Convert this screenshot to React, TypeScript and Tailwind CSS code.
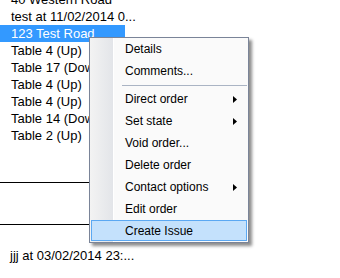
const listFont = { fontFamily: '"Liberation Sans Narrow", "Liberation Sans", Arial, sans-serif' };

const rows = [
  "40 Western Road",
  "test at 11/02/2014 0...",
  "123 Test Road",
  "Table 4 (Up)",
  "Table 17 (Down)",
  "Table 4 (Up)",
  "Table 4 (Up)",
  "Table 14 (Down)",
  "Table 2 (Up)",
];

type MenuItem = { label: string; sub?: boolean; hover?: boolean } | "sep";

const menu: MenuItem[] = [
  { label: "Details" },
  { label: "Comments..." },
  "sep",
  { label: "Direct order", sub: true },
  { label: "Set state", sub: true },
  { label: "Void order..." },
  { label: "Delete order" },
  { label: "Contact options", sub: true },
  { label: "Edit order" },
  { label: "Create Issue", hover: true },
];

function Arrow() {
  return (
    <svg width="4" height="7" viewBox="0 0 4 7" className="absolute right-[11px] top-[8px]">
      <path d="M0 0 L4 3.5 L0 7 Z" fill="#000" />
    </svg>
  );
}

function ContextMenu() {
  return (
    <div
      className="absolute left-[89px] top-[37px] w-[160px] h-[206px] border border-[#7a8498] bg-[#fafafa] shadow-[3px_3px_3px_rgba(0,0,0,0.45)] text-[12px] text-black"
      style={{ fontFamily: '"Liberation Sans", Arial, sans-serif' }}
    >
      <div className="absolute left-0 top-0 bottom-0 w-[24px] bg-gradient-to-r from-[#f3f3f3] to-[#e3e5e9] border-r border-white" />
      <div className="relative flex flex-col">
        {menu.map((item, i) =>
          item === "sep" ? (
            <div key={i} className="h-[6px] flex items-center pl-[32px] pr-[1px]">
              <div className="h-px w-full bg-[#aab4c4]" />
            </div>
          ) : item.hover ? (
            <div key={i} className="relative mx-[1px] h-[21px] mb-[1px] border border-[#5ba8f2] bg-[#c4e1fc] flex items-center pl-[33px]">
              {item.label}
            </div>
          ) : (
            <div key={i} className="relative h-[22px] flex items-center pl-[35px]">
              {item.label}
              {item.sub && <Arrow />}
            </div>
          )
        )}
      </div>
    </div>
  );
}

export default function App() {
  return (
    <div className="relative w-[340px] h-[278px] overflow-hidden bg-white">
      <div className="w-[125px] mt-[-9px] flex flex-col text-[13px] text-black" style={listFont}>
        {rows.map((r, i) => (
          <div
            key={i}
            className={`h-[17px] leading-[17px] pl-[11px] whitespace-nowrap ${i === 2 ? "bg-[#3399ff] text-white" : ""}`}
          >
            {r}
          </div>
        ))}
        <div className="mt-[38px] h-px bg-black" />
        <div className="mt-[41px] h-px bg-black" />
        <div className="mt-[22px] h-[17px] leading-[17px] pl-[10px] whitespace-nowrap">jjj at 03/02/2014 23:...</div>
      </div>
      <ContextMenu />
    </div>
  );
}
